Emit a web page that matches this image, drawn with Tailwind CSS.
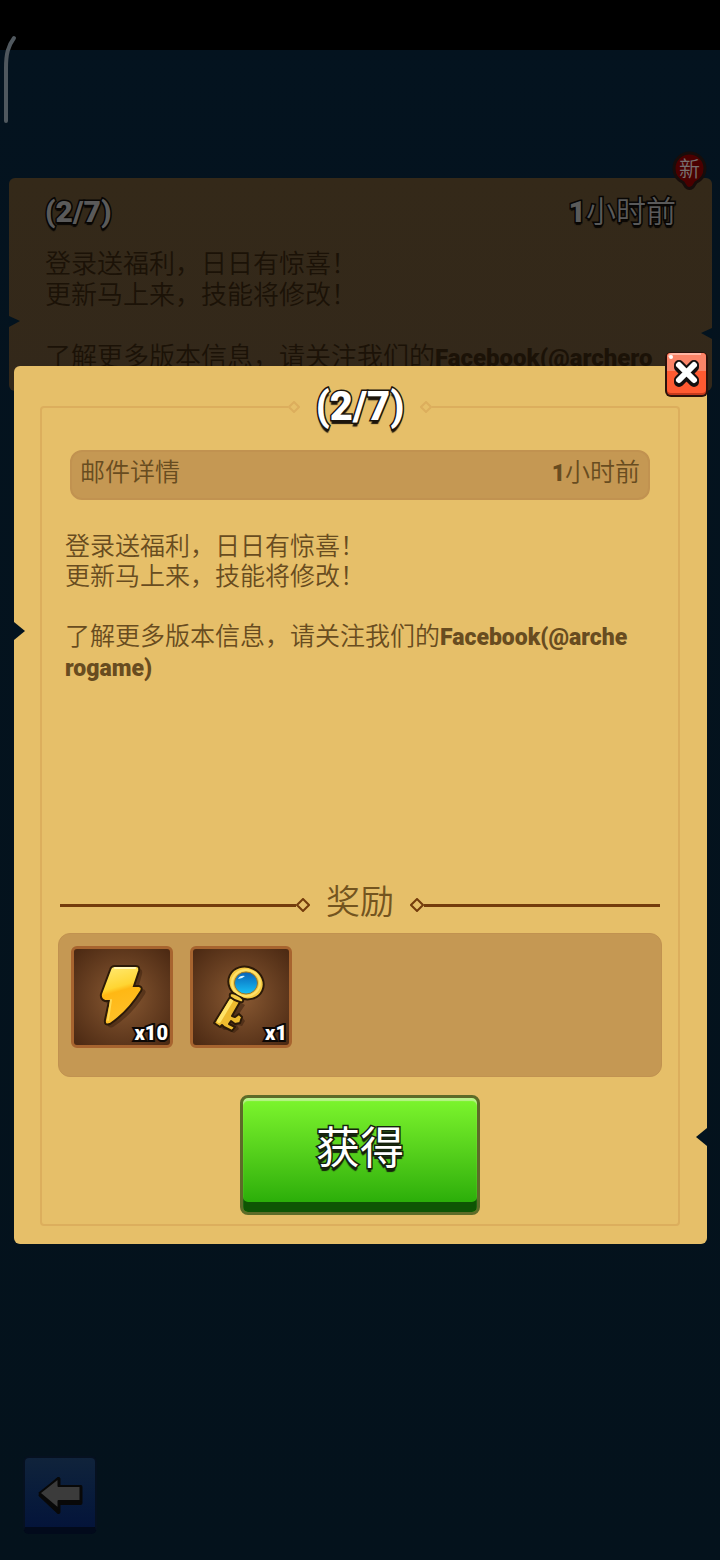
<!DOCTYPE html>
<html lang="zh-CN">
<head>
    <meta charset="UTF-8">
    <meta name="viewport" content="width=device-width, initial-scale=1.0">
    <title>邮件详情</title>
    <script src="https://cdn.jsdelivr.net/npm/@tailwindcss/browser@4"></script>
</head>
<body class="bg-black font-['Roboto','Noto_Sans_CJK_SC',sans-serif] font-[350]">
    <div class="relative min-h-screen flex flex-col bg-linear-to-b from-[#04131f] to-[#04121c] overflow-hidden">

        <!-- Status bar -->
        <header class="h-[50px] bg-black"></header>
        <svg class="absolute left-0 top-[34px] w-5 h-[92px]" viewBox="0 0 20 92" fill="none" stroke="#50585e" stroke-width="4" stroke-linecap="round">
            <path d="M14 4C8 12 6 20 6 34V87"/>
        </svg>

        <!-- Mail list, dimmed behind the dialog -->
        <main class="pt-32 pl-[9px] pr-2">
            <article class="relative h-[213px] rounded-md bg-linear-to-b from-[#342919] to-[#33281a] text-[#1b1207] pl-9 pr-9 pt-4">
                <div class="flex items-center justify-between h-9 text-[#5a5a5a]">
                    <h2 class="text-[30px] leading-[40px] font-black [-webkit-text-stroke:3px_#080604] [paint-order:stroke_fill] [text-shadow:0_3px_1px_#080604]">(2/7)</h2>
                    <time class="text-[30px] leading-[40px] [-webkit-text-stroke:3px_#080604] [paint-order:stroke_fill] [text-shadow:0_3px_1px_#080604]"><span class="font-black">1</span>小时前</time>
                </div>
                <p class="mt-[19px] text-[26px] leading-[31px] whitespace-nowrap">登录送福利，日日有惊喜！<br>更新马上来，技能将修改！<br><br>了解更多版本信息，请关注我们的<span class="text-[24px] font-black">Facebook(@archero</span></p>
                <svg class="absolute left-0 top-[138px] w-[11px] h-[11px]" viewBox="0 0 11 11" fill="#03131f"><path d="M0 0L11 5L0 11Z"/></svg>
                <svg class="absolute right-0 top-[150px] w-[11px] h-[11px]" viewBox="0 0 11 11" fill="#03131f"><path d="M11 0L0 5L11 11Z"/></svg>
                <span class="absolute right-[5px] -top-[27px] w-[35px] h-[40px] text-center text-[21px] leading-[36px] text-[#777070]">
                    <svg class="absolute inset-0 w-full h-full" viewBox="0 0 35 40" fill="#4a0000" stroke="#170d0b" stroke-width="3"><path d="M17.500 2C9 2 2 9 2 17.500C2 24 6 29 11 31.500L14 36Q17 39 21 36L24 31.500C29 29 33 24 33 17.500C33 9 26 2 17.500 2Z"/></svg>
                    <span class="relative">新</span>
                </span>
            </article>
        </main>

        <footer class="mt-auto px-[23px] pb-[26px]">
            <button type="button" aria-label="返回" class="block w-[74px] h-[78px] rounded-md bg-linear-to-b from-[#10233b] to-[#04143a] border-2 border-[#061120] border-b-[7px] border-b-[#020a1b]">
                <svg class="w-full h-full" viewBox="0 0 69 69" stroke-linejoin="round">
                    <path d="M15 37L33 21V29H55V45H33V54Z" fill="#080808" stroke="#080808" stroke-width="4"/>
                    <path d="M14 35L33 20V28H55V43H33V51Z" fill="#3b3b3b" stroke="#080808" stroke-width="2"/>
                </svg>
            </button>
        </footer>

        <!-- Mail dialog -->
        <div class="absolute inset-x-0 top-0 pt-[366px] pl-[14px] pr-[13px]">
            <section role="dialog" aria-labelledby="mail-title" class="relative rounded-md bg-[#e6bf69] pl-[26px] pr-[27px] pt-10 pb-[18px] text-[#684c20]">
                <svg class="absolute left-0 top-[256px] w-[11px] h-[18px]" viewBox="0 0 11 18" fill="#03131f"><path d="M0 0L11 9L0 18Z"/></svg>
                <svg class="absolute right-0 top-[762px] w-[11px] h-[18px]" viewBox="0 0 11 18" fill="#03131f"><path d="M11 0L0 9L11 18Z"/></svg>

                <button type="button" aria-label="关闭" class="absolute -right-[2px] -top-[15px] w-11 h-[47px]">
                    <svg class="w-full h-full" viewBox="0 0 44 47">
                        <rect x="0" y="1" width="43" height="45" rx="6" fill="#2a120c"/>
                        <rect x="2" y="2" width="39" height="42" rx="4" fill="#c63a1c"/>
                        <rect x="2" y="2" width="39" height="40" rx="4" fill="#ff5a31"/>
                        <path d="M2 20V6Q2 2 6 2H37Q41 2 41 6V20Z" fill="#fa8468"/>
                        <path d="M4 6Q4 3 8 3H36" stroke="#ffb5a2" stroke-width="2" fill="none"/>
                        <circle cx="6" cy="6" r="2" fill="#fff"/>
                        <path d="M14 16L29 31M29 16L14 31" stroke="#151010" stroke-width="10" stroke-linecap="round"/>
                        <path d="M14 14L29 29M29 14L14 29" stroke="#151010" stroke-width="10" stroke-linecap="round"/>
                        <path d="M14 14L29 29M29 14L14 29" stroke="#fff" stroke-width="6" stroke-linecap="round"/>
                    </svg>
                </button>

                <div class="border-2 border-[#dcae5d] rounded-sm px-4 pb-[9px]">
                    <div class="relative -mt-6 mx-auto w-[144px] h-[46px] flex items-center justify-between bg-[#e6bf69]">
                        <svg class="w-3 h-3" viewBox="0 0 12 12" fill="none" stroke="#dcae5d" stroke-width="2"><path d="M6 1L11 6L6 11L1 6Z"/></svg>
                        <h1 id="mail-title" class="text-[40px] leading-[44px] font-black text-white [-webkit-text-stroke:3px_#1c150c] [paint-order:stroke_fill] [text-shadow:0_4px_1px_#1c150c]">(2/7)</h1>
                        <svg class="w-3 h-3" viewBox="0 0 12 12" fill="none" stroke="#dcae5d" stroke-width="2"><path d="M6 1L11 6L6 11L1 6Z"/></svg>
                    </div>

                    <div class="mt-5 mx-3 h-[50px] px-2 pb-1 flex items-center justify-between rounded-xl bg-[#c59853] border-2 border-[#c19250] text-[25px] leading-[30px]">
                        <span>邮件详情</span>
                        <time><span class="text-[23px] font-black">1</span>小时前</time>
                    </div>

                    <p class="mt-8 mx-[7px] h-[349px] text-[25px] leading-[30px] whitespace-nowrap">登录送福利，日日有惊喜！<br>更新马上来，技能将修改！<br><br>了解更多版本信息，请关注我们的<span class="text-[23px] font-black">Facebook(@arche<br>rogame)</span></p>

                    <!-- Rewards -->
                    <div class="mx-[2px] h-12 flex items-center text-[#73541f]">
                        <div class="flex-1 h-[3px] bg-[#743c0c]"></div>
                        <svg class="w-[14px] h-[14px]" viewBox="0 0 14 14" fill="none" stroke="#743c0c" stroke-width="2"><path d="M7 1L13 7L7 13L1 7Z"/></svg>
                        <h2 class="px-4 pb-[6px] text-[34px] leading-[40px]">奖励</h2>
                        <svg class="w-[14px] h-[14px]" viewBox="0 0 14 14" fill="none" stroke="#743c0c" stroke-width="2"><path d="M7 1L13 7L7 13L1 7Z"/></svg>
                        <div class="flex-1 h-[3px] bg-[#743c0c]"></div>
                    </div>
                    <ul class="mt-1 h-36 p-3 flex gap-[17px] rounded-xl bg-[#c59853] border border-[#c19250]">
                        <li class="relative w-[102px] h-[102px] rounded-md border-3 border-[#a7642f] bg-radial from-[#8a5a33] to-[#4a2812]">
                            <svg class="w-full h-full" viewBox="0 0 96 96">
                                <defs>
                                    <linearGradient id="bolt" x1="0" y1="0" x2=".2" y2="1">
                                        <stop offset="0" stop-color="#ffec78"/><stop offset=".42" stop-color="#ffd532"/>
                                        <stop offset=".5" stop-color="#ffb814"/><stop offset="1" stop-color="#ffc02a"/>
                                    </linearGradient>
                                </defs>
                                <path d="M42 18H63Q67 18 66 23L62 38H67Q71 39 69 43Q56 64 37 76Q31 78 32 72L36 53H32Q27 51 28 46L37 22Q38 18 42 18Z" fill="#2c1608" opacity=".4" transform="translate(2 2)"/>
                                <path d="M41 17H62Q66 17 65 22L60 37H65Q69 38 67 42Q54 63 36 75Q30 77 31 71L35 52H31Q26 50 27 45L36 21Q37 17 41 17Z" fill="url(#bolt)" stroke="#2c1a08" stroke-width="2"/>
                                <path d="M41 19H61" stroke="#fff6b8" stroke-width="2" stroke-linecap="round"/>
                                <path d="M37 51L34 71" stroke="#ffda52" stroke-width="2" stroke-linecap="round"/>
                            </svg>
                            <span class="absolute right-[2px] bottom-0 text-[20px] leading-6 font-black text-white [-webkit-text-stroke:4px_#0d0805] [paint-order:stroke_fill] [text-shadow:0_2px_0_#0d0805]">x10</span>
                        </li>
                        <li class="relative w-[102px] h-[102px] rounded-md border-3 border-[#a7642f] bg-radial from-[#8a5a33] to-[#4a2812]">
                            <svg class="w-full h-full" viewBox="0 0 96 96">
                                <defs>
                                    <linearGradient id="gem" x1="0" y1="0" x2="0" y2="1">
                                        <stop offset="0" stop-color="#0862b8"/><stop offset="1" stop-color="#18c0f4"/>
                                    </linearGradient>
                                </defs>
                                <g stroke-linejoin="round">
                                    <path d="M40 49L49 54L39 69L46 66L49 70L46 75L41 74L43 78L38 82L31 79L28 79L21 74Z" fill="#2c1608" opacity=".45" transform="translate(3 2)"/>
                                    <path d="M37 48L47 53L39 67L42 68L46 65L49 68L47 74L42 75L38 72L36 75L42 78L39 82L31 78L29 76L27 78L21 74Z" fill="#eebb2e" stroke="#2c1a08" stroke-width="2"/>
                                    <path d="M38 52L26 72" stroke="#ffe467" stroke-width="4" stroke-linecap="round"/>
                                    <ellipse cx="53" cy="34" rx="18" ry="16" transform="rotate(25 53 34)" fill="#f5ca42" stroke="#2c1a08" stroke-width="2"/>
                                    <path d="M39 44Q45 45 50 50Q51 54 47 53Q42 52 37 48Q36 44 39 44Z" fill="#f5ca42" stroke="#2c1a08" stroke-width="2"/>
                                    <ellipse cx="53" cy="34" rx="14" ry="13" fill="none" stroke="#ffe26b" stroke-width="2"/>
                                    <ellipse cx="53" cy="34" rx="11.500" ry="11" fill="url(#gem)" stroke="#98772c"/>
                                    <path d="M45 30Q47 26 52 27Q49 30 45 30Z" fill="#d8f4ff"/>
                                </g>
                            </svg>
                            <span class="absolute right-[2px] bottom-0 text-[20px] leading-6 font-black text-white [-webkit-text-stroke:4px_#0d0805] [paint-order:stroke_fill] [text-shadow:0_2px_0_#0d0805]">x1</span>
                        </li>
                    </ul>

                    <button type="button" class="block mt-[18px] mx-auto w-60 h-[120px] rounded-lg border-3 border-[#5d6b28] bg-linear-to-b from-[#7df62d] to-[#20a805] shadow-[inset_0_3px_1px_#b9f28b,inset_0_-10px_0_#0e5504] pb-3 text-[44px] leading-[52px] font-normal text-white [-webkit-text-stroke:3px_#15210d] [paint-order:stroke_fill] [text-shadow:0_4px_1px_#15210d]">获得</button>
                </div>
            </section>
        </div>
    </div>
</body>
</html>
